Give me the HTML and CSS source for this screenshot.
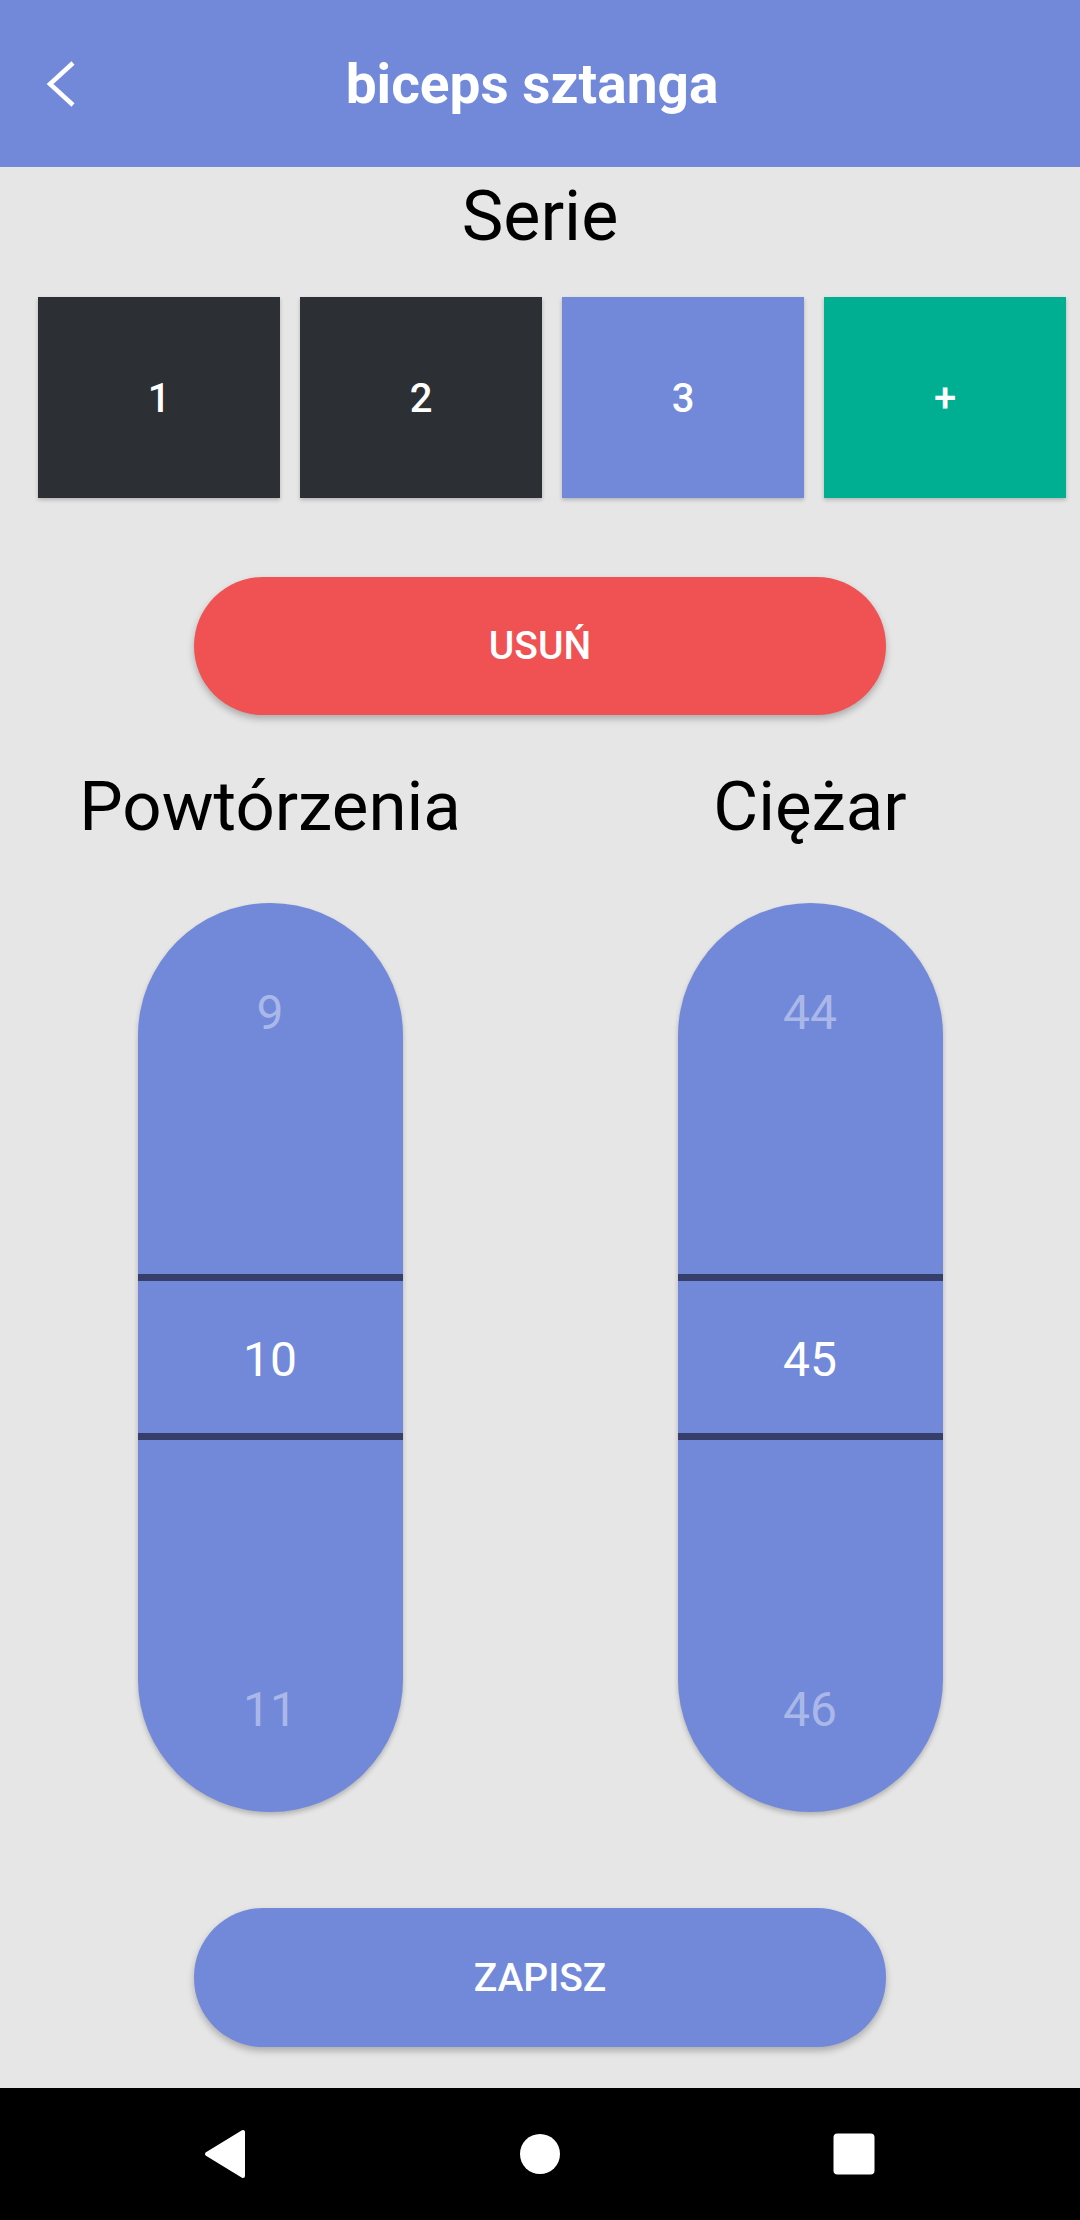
FILE: index.html
```html
<!DOCTYPE html>
<html lang="pl">
<head>
    <meta charset="UTF-8">
    <meta name="viewport" content="width=device-width, initial-scale=1.0">
    <title>biceps sztanga</title>
    <link rel="stylesheet" href="styles.css">
</head>
<body>
    <header class="toolbar">
        <button class="back" aria-label="Wstecz">
            <svg width="48" height="60" viewBox="0 0 48 60">
                <path d="M33 9 L10 30 L33 51" fill="none" stroke="#fff" stroke-width="4.5"/>
            </svg>
        </button>
        <h1 class="title">biceps sztanga</h1>
    </header>

    <main class="content">
        <h2 class="section-title">Serie</h2>
        <div class="series">
            <button class="set">1</button>
            <button class="set">2</button>
            <button class="set active">3</button>
            <button class="set add">+</button>
        </div>

        <button class="pill delete">USUŃ</button>

        <div class="pickers">
            <div class="column">
                <h2 class="label">Powtórzenia</h2>
                <div class="picker">
                    <div class="slot top"><span class="value faded">9</span></div>
                    <div class="divider"></div>
                    <div class="slot middle"><span class="value">10</span></div>
                    <div class="divider"></div>
                    <div class="slot bottom"><span class="value faded">11</span></div>
                </div>
            </div>
            <div class="column">
                <h2 class="label">Ciężar</h2>
                <div class="picker">
                    <div class="slot top"><span class="value faded">44</span></div>
                    <div class="divider"></div>
                    <div class="slot middle"><span class="value">45</span></div>
                    <div class="divider"></div>
                    <div class="slot bottom"><span class="value faded">46</span></div>
                </div>
            </div>
        </div>

        <button class="pill save">ZAPISZ</button>
    </main>

    <nav class="navbar">
        <div class="nav-item">
            <svg width="48" height="52" viewBox="0 0 48 52">
                <path d="M41 4 L41 48 L5 26 Z" fill="#fff" stroke="#fff" stroke-width="4" stroke-linejoin="round"/>
            </svg>
        </div>
        <div class="nav-item">
            <svg width="44" height="44" viewBox="0 0 44 44">
                <circle cx="22" cy="22" r="20" fill="#fff"/>
            </svg>
        </div>
        <div class="nav-item">
            <svg width="44" height="44" viewBox="0 0 44 44">
                <rect x="1.5" y="1.5" width="41" height="41" rx="4" fill="#fff"/>
            </svg>
        </div>
    </nav>
</body>
</html>
```

FILE: styles.css
```css
body {
    margin: 0;
    width: 1080px;
    height: 2220px;
    display: flex;
    flex-direction: column;
    background-color: #e6e6e6;
    font-family: Roboto, "Noto Sans", sans-serif;
    overflow: hidden;
}
button {
    font-family: inherit;
    border: none;
    padding: 0;
    cursor: pointer;
}

.toolbar {
    height: 167px;
    flex-shrink: 0;
    display: grid;
    grid-template-columns: 104px 1fr 120px;
    align-items: center;
    background-color: #7289da;
}
.back {
    background: none;
    display: flex;
    padding-left: 40px;
}
.title {
    grid-column: 2;
    margin: 0;
    text-align: center;
    color: #fff;
    font-size: 55px;
    font-weight: 700;
}

.content {
    flex: 1;
    display: flex;
    flex-direction: column;
    align-items: center;
}
.section-title {
    margin: 8px 0 0;
    font-size: 70px;
    line-height: 82px;
    font-weight: 400;
    color: #000;
}

.series {
    align-self: stretch;
    display: flex;
    gap: 20px;
    margin-top: 40px;
    padding-left: 38px;
}
.set {
    width: 242px;
    height: 201px;
    padding-top: 2px;
    background-color: #2c2f33;
    color: #fff;
    font-size: 40px;
    font-weight: 500;
    box-shadow: 0 2px 4px rgba(0, 0, 0, 0.22);
}
.set.active {
    background-color: #7289da;
}
.set.add {
    background-color: #00af91;
}

.pill {
    width: 692px;
    height: 138px;
    border-radius: 69px;
    color: #fff;
    font-size: 39px;
    font-weight: 500;
    box-shadow: 0 4px 7px rgba(0, 0, 0, 0.25);
}
.delete {
    margin-top: 79px;
    background-color: #f05152;
}
.save {
    margin-top: 96px;
    height: 139px;
    background-color: #7289da;
}

.pickers {
    align-self: stretch;
    display: grid;
    grid-template-columns: 1fr 1fr;
}
.column {
    display: flex;
    flex-direction: column;
    align-items: center;
}
.label {
    margin: 52px 0 0;
    font-size: 69px;
    line-height: 80px;
    font-weight: 400;
    color: #000;
}
.picker {
    width: 265px;
    height: 909px;
    margin-top: 56px;
    border-radius: 133px;
    background-color: #7289da;
    display: flex;
    flex-direction: column;
    overflow: hidden;
    box-shadow: 0 3px 5px rgba(0, 0, 0, 0.22);
}
.slot {
    display: flex;
    justify-content: center;
}
.slot.top {
    height: 371px;
    align-items: flex-start;
    padding-top: 81px;
    box-sizing: border-box;
}
.slot.middle {
    height: 152px;
    align-items: center;
    padding-top: 5px;
    box-sizing: border-box;
}
.slot.bottom {
    flex: 1;
    align-items: flex-end;
    padding-bottom: 73px;
}
.divider {
    height: 7px;
    background-color: #363f6b;
}
.value {
    font-size: 48px;
    line-height: 58px;
    color: #fff;
}
.value.faded {
    color: #aab8e9;
}

.navbar {
    height: 132px;
    flex-shrink: 0;
    background-color: #000;
    display: flex;
    justify-content: center;
    align-items: center;
    gap: 194px;
}
.nav-item {
    width: 120px;
    display: flex;
    justify-content: center;
}
```
